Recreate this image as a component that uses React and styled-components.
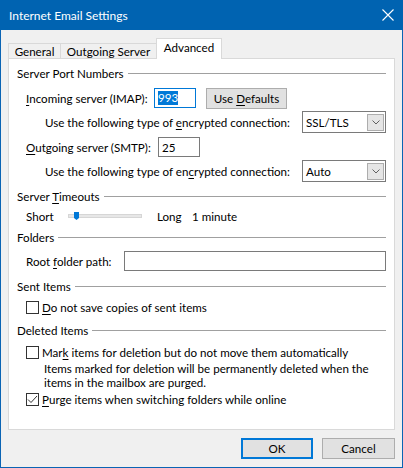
import styled, { createGlobalStyle } from 'styled-components';

const GlobalStyle = createGlobalStyle`
  html, body { margin: 0; padding: 0; background: #fff; }
  * { box-sizing: border-box; }
`;

const Window = styled.div`
  width: 403px;
  height: 468px;
  border: 1px solid #0a64b4;
  border-top: none;
  background: #f0f0f0;
  font-family: Lato, "Noto Sans", sans-serif;
  font-size: 11.6px;
  color: #000;
  display: flex;
  flex-direction: column;
`;

const TitleBar = styled.div`
  height: 30px;
  margin: 0 -1px;
  background: #0063b1;
  color: #fff;
  display: flex;
  align-items: center;
  justify-content: space-between;
  padding: 0 9px 0 9px;
  font-size: 12px;
`;

const CloseIcon = () => (
  <svg width="12" height="12" viewBox="0 0 12 12">
    <path d="M0.5 0.5 L11.5 11.5 M11.5 0.5 L0.5 11.5" stroke="#fff" strokeWidth="1.1" />
  </svg>
);

const Body = styled.div`
  flex: 1;
  display: flex;
  flex-direction: column;
  padding: 8px 7px 0 7px;
`;

const TabStrip = styled.div`
  display: flex;
  align-items: flex-end;
  height: 21px;
  margin-bottom: -1px;
  position: relative;
  z-index: 1;
`;

const Tab = styled.div`
  width: ${p => p.$w}px;
  height: ${p => (p.$active ? 21 : 16)}px;
  margin-left: ${p => (p.$first ? 0 : -1)}px;
  border: 1px solid #d9d9d9;
  border-bottom: ${p => (p.$active ? 'none' : '1px solid #d9d9d9')};
  background: ${p => (p.$active ? '#fff' : '#f0f0f0')};
  display: flex;
  align-items: center;
  justify-content: center;
  padding-bottom: ${p => (p.$active ? 3 : 0)}px;
  white-space: nowrap;
`;

const Panel = styled.div`
  height: 372px;
  border: 1px solid #d9d9d9;
  background: #fff;
  padding: 0 8px;
  display: flex;
  flex-direction: column;
`;

const SectionHeader = styled.div`
  height: 16px;
  margin-top: ${p => p.$mt}px;
  display: flex;
  align-items: center;
  gap: 4px;
  &::after {
    content: '';
    flex: 1;
    height: 1px;
    background: #a0a0a0;
  }
`;

const Row = styled.div`
  height: ${p => p.$h || 22}px;
  margin-top: ${p => p.$mt}px;
  padding-left: ${p => p.$indent}px;
  display: flex;
  align-items: center;
  justify-content: ${p => (p.$spread ? 'space-between' : 'flex-start')};
`;

const Label = styled.span`
  width: ${p => (p.$w ? `${p.$w}px` : 'auto')};
  flex-shrink: 0;
  white-space: nowrap;
`;

const U = styled.span`
  text-decoration: underline;
  text-underline-offset: 2px;
`;

const TextBox = styled.div`
  width: ${p => (p.$w ? `${p.$w}px` : 'auto')};
  flex: ${p => (p.$w ? 'none' : 1)};
  height: ${p => p.$h || 20}px;
  border: 1px solid ${p => (p.$focus ? '#0078d7' : '#7a7a7a')};
  background: #fff;
  display: flex;
  align-items: center;
  padding-left: 3px;
`;

const Selected = styled.span`
  background: #0078d7;
  color: #fff;
  line-height: 14px;
`;

const Button = styled.div`
  width: ${p => p.$w}px;
  height: 21px;
  margin-left: ${p => p.$ml || 0}px;
  background: #e1e1e1;
  border: ${p => (p.$default ? '2px solid #0078d7' : '1px solid #adadad')};
  display: flex;
  align-items: center;
  justify-content: center;
  white-space: pre;
`;

const Select = styled.div`
  width: 84px;
  height: 22px;
  border: 1px solid #7a7a7a;
  background: #fff;
  display: flex;
  align-items: center;
  justify-content: space-between;
  padding: 2px 1px 2px 3px;
`;

const DropButton = styled.div`
  width: 17px;
  height: 17px;
  background: #e5e5e5;
  border: 1px solid #adadad;
  display: flex;
  align-items: center;
  justify-content: center;
`;

const Chevron = () => (
  <svg width="8" height="5" viewBox="0 0 8 5">
    <path d="M0.5 0.5 L4 4 L7.5 0.5" stroke="#606060" strokeWidth="1" fill="none" />
  </svg>
);

const Dropdown = ({ value }) => (
  <Select>
    <span>{value}</span>
    <DropButton>
      <Chevron />
    </DropButton>
  </Select>
);

const SliderTrack = styled.div`
  position: relative;
  width: 74px;
  height: 4px;
  margin-right: 15px;
  background: #e7e7e7;
  border: 1px solid #d6d6d6;
`;

const SliderThumb = styled.div`
  position: absolute;
  left: 5px;
  top: -3px;
  width: 5px;
  height: 8px;
  background: #0078d7;
  clip-path: polygon(0 0, 100% 0, 100% 75%, 50% 100%, 0 75%);
`;

const Box = styled.div`
  width: 13px;
  height: 13px;
  border: 1px solid #333;
  background: #fff;
  margin-right: 3px;
  flex-shrink: 0;
  display: flex;
  align-items: center;
  justify-content: center;
`;

const Check = () => (
  <svg width="11" height="11" viewBox="0 0 11 11">
    <path d="M1 5.5 L4 8.5 L10 2" stroke="#333" strokeWidth="1" fill="none" />
  </svg>
);

const Note = styled.div`
  margin-top: 2px;
  padding-left: 27px;
  line-height: 14px;
  white-space: nowrap;
`;

const Footer = styled.div`
  display: flex;
  justify-content: flex-end;
  padding-top: 8px;
  gap: 9px;
`;

export default function App() {
  return (
    <>
      <GlobalStyle />
      <Window>
        <TitleBar>
          <span>Internet Email Settings</span>
          <CloseIcon />
        </TitleBar>
        <Body>
          <TabStrip>
            <Tab $first $w={53}>General</Tab>
            <Tab $w={97}>Outgoing Server</Tab>
            <Tab $active $w={66}>Advanced</Tab>
          </TabStrip>
          <Panel>
            <SectionHeader $mt={6}><span>Server Port Numbers</span></SectionHeader>
            <Row $mt={6} $indent={9}>
              <Label $w={128}><U>I</U>ncoming server (IMAP):</Label>
              <TextBox $w={42} $focus><Selected>993</Selected></TextBox>
              <Button $w={81} $ml={10}><span>Use <U>D</U>efaults</span></Button>
            </Row>
            <Row $mt={2} $indent={28} $spread>
              <Label>Use the following type of <U>e</U>ncrypted connection:</Label>
              <Dropdown value="SSL/TLS" />
            </Row>
            <Row $mt={3} $indent={9}>
              <Label $w={132}><U>O</U>utgoing server (SMTP):</Label>
              <TextBox $w={42}>25</TextBox>
            </Row>
            <Row $mt={2} $indent={28} $spread>
              <Label>Use the following type of en<U>c</U>rypted connection:</Label>
              <Dropdown value="Auto" />
            </Row>
            <SectionHeader $mt={6}><span>Server <U>T</U>imeouts</span></SectionHeader>
            <Row $h={16} $mt={4} $indent={9}>
              <Label $w={42}>Short</Label>
              <SliderTrack>
                <SliderThumb />
              </SliderTrack>
              <Label $w={35}>Long</Label>
              <Label>1 minute</Label>
            </Row>
            <SectionHeader $mt={5}><span>Folders</span></SectionHeader>
            <Row $h={20} $mt={6} $indent={9}>
              <Label $w={98}>Root <U>f</U>older path:</Label>
              <TextBox $h={20} />
            </Row>
            <SectionHeader $mt={7}><span>Sent Items</span></SectionHeader>
            <Row $h={16} $mt={5} $indent={9}>
              <Box />
              <Label><U>D</U>o not save copies of sent items</Label>
            </Row>
            <SectionHeader $mt={7}><span>Deleted Items</span></SectionHeader>
            <Row $h={16} $mt={6} $indent={9}>
              <Box />
              <Label>Mar<U>k</U> items for deletion but do not move them automatically</Label>
            </Row>
            <Note>
              Items marked for deletion will be permanently deleted when the
              <br />
              items in the mailbox are purged.
            </Note>
            <Row $h={16} $mt={1} $indent={9}>
              <Box><Check /></Box>
              <Label><U>P</U>urge items when switching folders while online</Label>
            </Row>
          </Panel>
          <Footer>
            <Button $w={72} $default>OK</Button>
            <Button $w={73}>Cancel</Button>
          </Footer>
        </Body>
      </Window>
    </>
  );
}
